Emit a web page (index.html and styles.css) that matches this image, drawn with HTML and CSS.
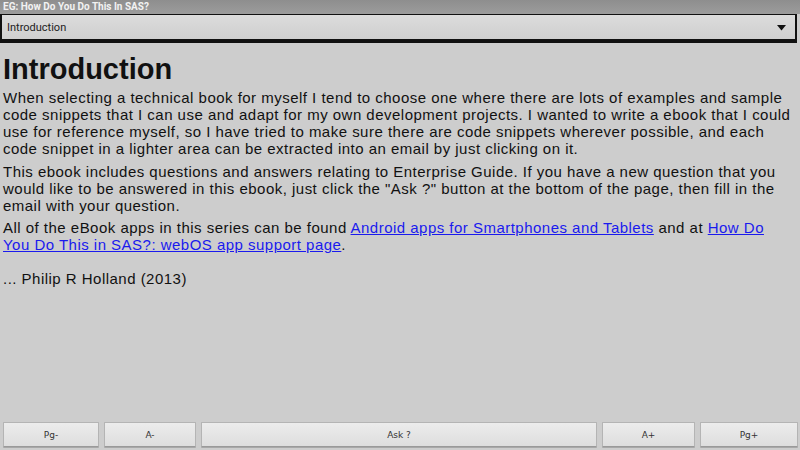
FILE: index.html
```html
<!DOCTYPE html>
<html>
<head>
<meta charset="utf-8">
<link rel="stylesheet" href="styles.css">
</head>
<body>
<div class="app">
  <div class="titlebar">EG: How Do You Do This In SAS?</div>
  <div class="select">
    <span class="select-label">Introduction</span>
    <svg class="arrow" width="9" height="6" viewBox="0 0 9 6"><path d="M0 0 H9 L4.5 5.5 Z" fill="#111"/></svg>
  </div>
  <div class="content">
    <h1>Introduction</h1>
    <p>When selecting a technical book for myself I tend to choose one where there are lots of examples and sample code snippets that I can use and adapt for my own development projects. I wanted to write a ebook that I could use for reference myself, so I have tried to make sure there are code snippets wherever possible, and each code snippet in a lighter area can be extracted into an email by just clicking on it.</p>
    <p>This ebook includes questions and answers relating to Enterprise Guide. If you have a new question that you would like to be answered in this ebook, just click the "Ask ?" button at the bottom of the page, then fill in the email with your question.</p>
    <p>All of the eBook apps in this series can be found <a href="#">Android apps for Smartphones and Tablets</a> and at <a href="#">How Do</a><br><a href="#">You Do This in SAS?: webOS app support page</a>.</p>
    <p class="sig">... Philip R Holland (2013)</p>
  </div>
  <div class="toolbar">
    <button class="btn btn-pg">Pg-</button>
    <button class="btn btn-a">A-</button>
    <button class="btn btn-ask">Ask ?</button>
    <button class="btn btn-a2">A+</button>
    <button class="btn btn-pg2">Pg+</button>
  </div>
</div>
</body>
</html>
```
FILE: styles.css
```css
html, body {
  margin: 0;
  padding: 0;
  background: #cdcdcd;
}
.app {
  width: 800px;
  height: 450px;
  display: flex;
  flex-direction: column;
  overflow: hidden;
  background: #cdcdcd;
}
.titlebar {
  height: 14px;
  line-height: 14px;
  background: linear-gradient(#8e8e8e, #9c9c9c);
  color: #f2f2f2;
  font-family: Roboto, "Liberation Sans", sans-serif;
  font-weight: bold;
  font-size: 10px;
  padding-left: 3px;
  white-space: nowrap;
}
.select {
  height: 23px;
  margin-right: 3px;
  border: 2px solid #111;
  border-bottom-width: 4px;
  border-top-width: 1px;
  background: linear-gradient(#dcdcdc, #cfcfcf);
  display: flex;
  align-items: center;
  justify-content: space-between;
  padding: 1px 9px 0 5px;
  font-family: Roboto, "Liberation Sans", sans-serif;
  font-size: 11px;
  color: #222;
}
.arrow {
  display: block;
}
.content {
  flex: 1;
  padding: 0 8px 0 3px;
  font-family: "Liberation Sans", Arial, sans-serif;
  color: #111;
  font-size: 15px;
  letter-spacing: 0.48px;
  line-height: 17px;
}
h1 {
  margin: 9px 0 3px 0;
  font-size: 29px;
  line-height: 34px;
  letter-spacing: 0;
  font-weight: bold;
}
p {
  margin: 0 0 5.5px 0;
}
a {
  color: #1a1aee;
  text-decoration: underline;
}
.sig {
  margin-top: 17px;
}
.toolbar {
  display: flex;
  gap: 5px;
  padding: 0 0 3px 3px;
  height: 25px;
}
.btn {
  height: 25px;
  padding: 0;
  border: 1px solid #b4b4b4;
  border-bottom-color: #9a9a9a;
  border-radius: 1px;
  background: linear-gradient(#ececec, #dedede);
  box-shadow: 0 1px 0 #a8a8a8;
  font-family: "DejaVu Sans", sans-serif;
  font-size: 9px;
  color: #333;
}
.btn-pg { width: 96px; }
.btn-a { width: 92px; }
.btn-ask { width: 396px; }
.btn-a2 { width: 93px; }
.btn-pg2 { width: 98px; }
```
